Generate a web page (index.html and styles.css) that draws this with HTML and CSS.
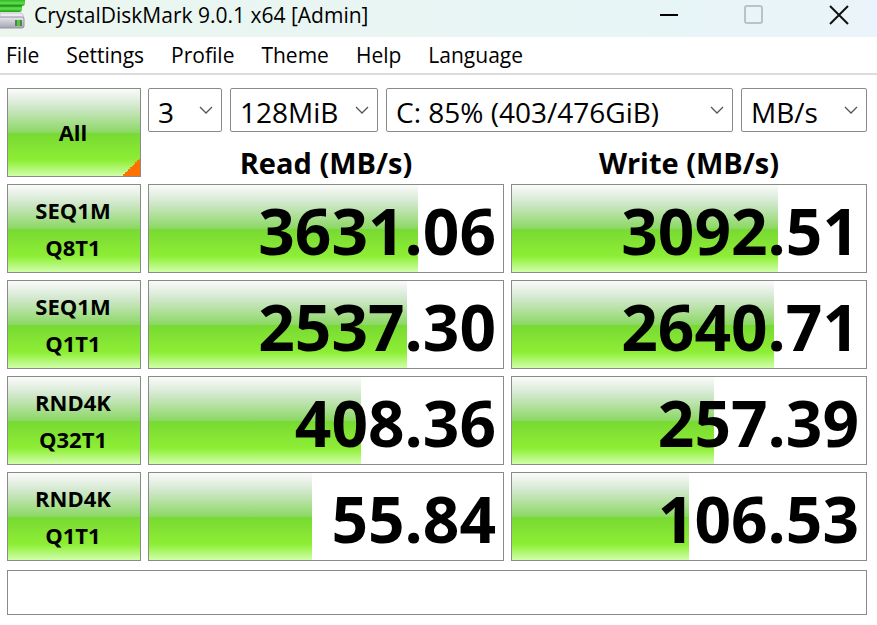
FILE: index.html
```
<!DOCTYPE html>
<html lang="en">
<head>
<meta charset="utf-8">
<meta name="viewport" content="width=device-width, initial-scale=1">
<title>CrystalDiskMark 9.0.1 x64 [Admin]</title>
<link rel="stylesheet" href="styles.css">
</head>
<body>

<header class="titleBar">
  <svg class="appIcon" width="26" height="30" viewBox="0 0 26 30" aria-hidden="true">
    <defs>
      <linearGradient id="arrow" x1="0" y1="0" x2="0" y2="1">
        <stop offset="0" stop-color="#27a824"/>
        <stop offset="0.6" stop-color="#5fe04a"/>
        <stop offset="1" stop-color="#1d9a1c"/>
      </linearGradient>
      <linearGradient id="drive" x1="0" y1="0" x2="0" y2="1">
        <stop offset="0" stop-color="#e6e6ee"/>
        <stop offset="1" stop-color="#a6a6b2"/>
      </linearGradient>
    </defs>
    <path d="M0 13h21q2 0 3 5H0z" fill="#ececf2" stroke="#c4c4ce"/>
    <rect x="-3" y="17" width="27" height="11" rx="2" fill="url(#drive)" stroke="#9292a0"/>
    <rect x="15" y="20" width="7" height="6" fill="#5c7a5c"/>
    <rect x="17" y="20" width="3" height="6" fill="#49d331"/>
    <path d="M-1 4h23v5q0 3-3 3H-1z" fill="url(#arrow)"/>
    <path d="M-1-1h26v4q0 3-3 3H-1z" fill="url(#arrow)"/>
    <path d="M0 6h22" stroke="#158a17"/>
  </svg>
  <h1 class="titleText">CrystalDiskMark 9.0.1 x64 [Admin]</h1>
  <div class="windowButtons">
    <button type="button" aria-label="Minimize">
      <svg width="20" height="20" viewBox="0 0 20 20"><path d="M1 10h18" stroke="#000" stroke-width="2"/></svg>
    </button>
    <button type="button" aria-label="Maximize" disabled>
      <svg width="20" height="20" viewBox="0 0 20 20"><rect x="1" y="1" width="17" height="17" rx="2" fill="none" stroke="#b9c3c6" stroke-width="2"/></svg>
    </button>
    <button type="button" aria-label="Close">
      <svg width="20" height="20" viewBox="0 0 20 20"><path d="M1 1l18 18M19 1L1 19" stroke="#111" stroke-width="2"/></svg>
    </button>
  </div>
</header>

<nav class="menuBar">
  <a href="#file">File</a>
  <a href="#settings">Settings</a>
  <a href="#profile">Profile</a>
  <a href="#theme">Theme</a>
  <a href="#help">Help</a>
  <a href="#language">Language</a>
</nav>

<main class="content">
  <div class="benchmark">
    <button class="testButton allButton" type="button">All</button>
    <div class="options">
      <div class="selects">
        <select class="runs" aria-label="Test count"><option>3</option></select>
        <select class="size" aria-label="Test size"><option>128MiB</option></select>
        <select class="drive" aria-label="Drive"><option>C: 85% (403/476GiB)</option></select>
        <select class="unit" aria-label="Unit"><option>MB/s</option></select>
      </div>
      <div class="headings">
        <h2>Read (MB/s)</h2>
        <h2>Write (MB/s)</h2>
      </div>
    </div>

    <button class="testButton" type="button">SEQ1M<br>Q8T1</button>
    <div class="result"><div class="bar" style="width:76%"></div><span class="value">3631.06</span></div>
    <div class="result"><div class="bar" style="width:75%"></div><span class="value">3092.51</span></div>

    <button class="testButton" type="button">SEQ1M<br>Q1T1</button>
    <div class="result"><div class="bar" style="width:73%"></div><span class="value">2537.30</span></div>
    <div class="result"><div class="bar" style="width:74%"></div><span class="value">2640.71</span></div>

    <button class="testButton" type="button">RND4K<br>Q32T1</button>
    <div class="result"><div class="bar" style="width:60%"></div><span class="value">408.36</span></div>
    <div class="result"><div class="bar" style="width:57%"></div><span class="value">257.39</span></div>

    <button class="testButton" type="button">RND4K<br>Q1T1</button>
    <div class="result"><div class="bar" style="width:46%"></div><span class="value">55.84</span></div>
    <div class="result"><div class="bar" style="width:50%"></div><span class="value">106.53</span></div>
  </div>

  <input class="comment" type="text" aria-label="Comment">
</main>

</body>
</html>
```
FILE: styles.css
```
* {
  box-sizing: border-box;
}

body {
  margin: 0;
  background-color: white;
  color: black;
  font-family: "Open Sans", "Noto Sans", sans-serif;
}

button, select, input {
  font-family: inherit;
  color: inherit;
}

.titleBar {
  display: flex;
  align-items: center;
  height: 37px;
  padding-bottom: 7px;
  background-image: linear-gradient(to right, #ebf6ee, #e7f5f6 70%, #eaf4fa);
}

.appIcon {
  margin-right: 8px;
}

.titleText {
  flex: 1;
  margin: 0;
  font-size: 21px;
  font-weight: 400;
  line-height: 30px;
  white-space: nowrap;
}

.windowButtons {
  display: flex;
  gap: 8px;
}

.windowButtons button {
  display: flex;
  align-items: center;
  justify-content: center;
  width: 77px;
  height: 30px;
  padding: 0;
  border: none;
  background: none;
}

.menuBar {
  display: flex;
  gap: 27px;
  padding: 4px 6px;
  border-bottom: 2px solid #dcdcdc;
}

.menuBar a {
  color: black;
  font-size: 21px;
  line-height: 28px;
  text-decoration: none;
}

.content {
  padding: 13px 10px 11px 7px;
}

.benchmark {
  display: grid;
  grid-template-columns: 134px 1fr 1fr;
  grid-auto-rows: 89px;
  gap: 7px;
}

.testButton, .bar {
  background-image: linear-gradient(#fafafa, #d2e8ce 20%, #8cd864 50%, #78da32 51%, #8eee36 82%, #d0ffaa);
}

.testButton {
  padding: 0 2px 0 0;
  border: 1px solid #8a8a8a;
  font-size: 22px;
  font-weight: 700;
  line-height: 37px;
}

.allButton {
  background-image:
    linear-gradient(135deg, transparent 50%, #ff7200 50%),
    linear-gradient(#fafafa, #d2e8ce 20%, #8cd864 50%, #78da32 51%, #8eee36 82%, #d0ffaa);
  background-position: right bottom, 0 0;
  background-repeat: no-repeat;
  background-size: 18px 18px, 100% 100%;
}

.options {
  grid-column: span 2;
}

.selects {
  display: flex;
  gap: 8px;
}

select {
  height: 44px;
  padding: 3px 9px 0;
  border: 1px solid #8a8a8a;
  border-radius: 2px;
  appearance: none;
  background: white url("data:image/svg+xml,%3Csvg xmlns='http://www.w3.org/2000/svg' width='14' height='8'%3E%3Cpath d='M1 1l6 6 6-6' fill='none' stroke='%23555' stroke-width='1.3'/%3E%3C/svg%3E") no-repeat right 8px center;
  font-size: 28px;
}

.runs {
  width: 74px;
}

.size {
  width: 148px;
}

.drive {
  flex: 1;
  min-width: 0;
}

.unit {
  width: 126px;
}

.headings {
  display: grid;
  grid-template-columns: 1fr 1fr;
  gap: 7px;
}

.headings h2 {
  margin: 0;
  font-size: 29px;
  line-height: 62px;
  height: 44px;
  text-align: center;
}

/* the bar and the number share one cell */
.result {
  display: grid;
  border: 1px solid #8a8a8a;
}

.bar, .value {
  grid-area: 1 / 1;
}

.value {
  padding: 6px 7px 0 0;
  font-size: 64px;
  font-weight: 700;
  line-height: 80px;
  text-align: right;
}

.comment {
  display: block;
  width: 100%;
  height: 45px;
  margin-top: 9px;
  padding: 0 10px;
  border: 1px solid #8a8a8a;
  font-size: 22px;
}
```
